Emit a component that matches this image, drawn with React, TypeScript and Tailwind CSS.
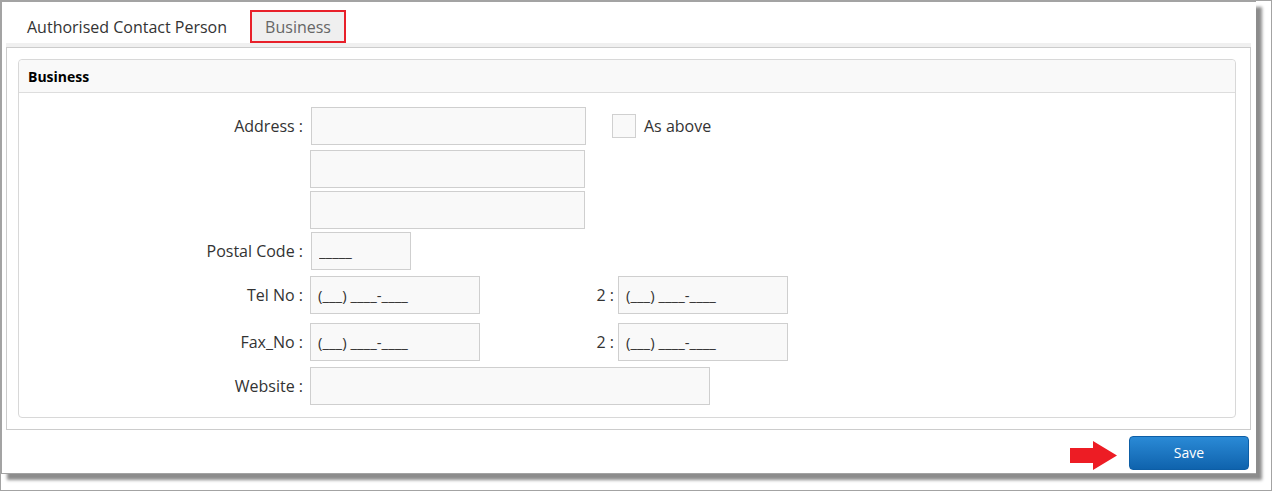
const font = { fontFamily: '"Open Sans", "Noto Sans", sans-serif' };

function Field({ w, value = "", className = "" }: { w: string; value?: string; className?: string }) {
  return (
    <input
      readOnly
      value={value}
      className={`${w} h-[38px] border border-[#cfcfcf] bg-[#f9f9f9] px-[7px] text-[15px] text-[#333] outline-none ${className}`}
    />
  );
}

function Label({ children }: { children: React.ReactNode }) {
  return <div className="w-[292px] shrink-0 pr-[8px] text-right text-[16px] text-[#333]">{children}</div>;
}

function SecondLabel({ children }: { children: React.ReactNode }) {
  return <div className="w-[138px] shrink-0 pr-[4px] text-right text-[16px] text-[#333]">{children}</div>;
}

export default function App() {
  return (
    <div className="h-[491px] w-[1272px] overflow-hidden border border-[#a3a3a3] bg-white" style={font}>
      <div className="flex h-[473px] w-[1255px] flex-col border-l border-t border-b border-[#a3a3a3] bg-white pt-[8px] shadow-[6px_6px_3px_rgba(0,0,0,0.45)]">
        {/* tabs */}
        <div className="flex h-[33px] items-stretch pl-[5px]">
          <div className="flex items-center px-[20px] text-[16px] text-[#333]">Authorised Contact Person</div>
          <div className="ml-[3px] flex w-[96px] items-center justify-center border-2 border-[#e8202a] bg-[#efefef] text-[16px] text-[#666]">
            Business
          </div>
        </div>
        <div className="ml-[4px] mr-[5px] h-[4px] bg-[#f0f0f0]" />

        <div className="ml-[4px] mr-[5px] h-[383px] border border-[#cccccc] px-[11px] pb-[11px] pt-[11px] pr-[14px]">
          <div className="h-[359px] rounded-[4px] border border-[#d8d8d8]">
            <div className="flex h-[33px] items-center rounded-t-[4px] border-b border-[#dddddd] bg-[#f9f9f9] pl-[9px] text-[14px] font-bold text-black">
              Business
            </div>

            <div className="pt-[14px]">
              <div className="flex items-center">
                <Label>Address :</Label>
                <Field w="w-[275px]" />
                <div className="ml-[26px] h-[24px] w-[24px] border border-[#d0d0d0] bg-[#f9f9f9]" />
                <span className="ml-[8px] text-[16px] text-[#333]">As above</span>
              </div>
              <div className="mt-[5px] flex">
                <div className="w-[291px] shrink-0" />
                <Field w="w-[275px]" />
              </div>
              <div className="mt-[3px] flex">
                <div className="w-[291px] shrink-0" />
                <Field w="w-[275px]" />
              </div>
              <div className="mt-[3px] flex items-center">
                <Label>Postal Code :</Label>
                <Field w="w-[100px]" value="_____" />
              </div>
              <div className="mt-[6px] flex items-center">
                <Label>Tel No :</Label>
                <Field w="w-[170px]" value="(___) ____-____" className="-ml-[1px]" />
                <SecondLabel>2 :</SecondLabel>
                <Field w="w-[170px]" value="(___) ____-____" />
              </div>
              <div className="mt-[9px] flex items-center">
                <Label>Fax_No :</Label>
                <Field w="w-[170px]" value="(___) ____-____" className="-ml-[1px]" />
                <SecondLabel>2 :</SecondLabel>
                <Field w="w-[170px]" value="(___) ____-____" />
              </div>
              <div className="mt-[6px] flex items-center">
                <Label>Website :</Label>
                <Field w="w-[400px]" className="-ml-[1px]" />
              </div>
            </div>
          </div>
        </div>

        <div className="mr-[7px] mt-[5px] flex items-center justify-end">
          <svg width="47" height="29" viewBox="0 0 47 29" className="mr-[12px] mt-[6px]">
            <polygon points="0,7 23,7 23,0 47,14.5 23,29 23,22 0,22" fill="#ed1c24" />
          </svg>
          <button className="h-[34px] w-[120px] rounded-[4px] border border-[#0d5ea6] bg-gradient-to-b from-[#2a8ad6] to-[#0f63ad] text-[14px] text-white">
            Save
          </button>
        </div>
      </div>
    </div>
  );
}
